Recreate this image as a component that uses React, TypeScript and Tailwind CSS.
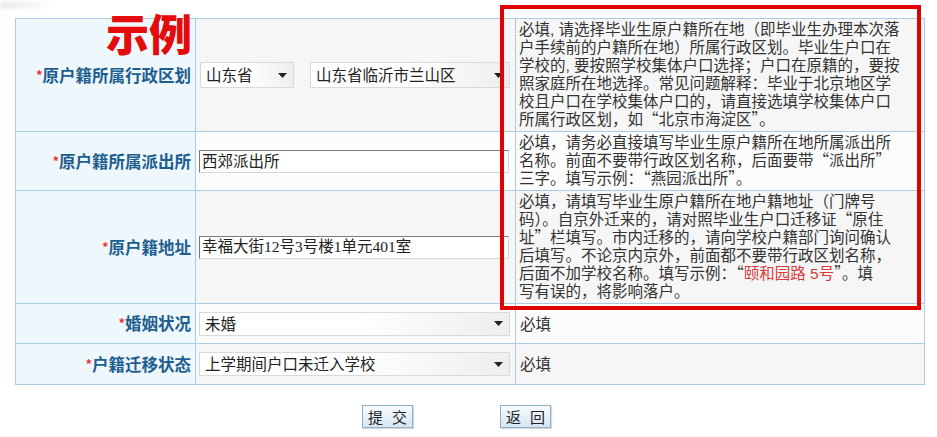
import React from 'react';

const Arrow: React.FC = () => (
  <svg width="9" height="5" viewBox="0 0 9 5" className="shrink-0">
    <path d="M0 0 L9 0 L4.5 5 Z" fill="#222" />
  </svg>
);

const FakeSelect: React.FC<{ value: string; className: string }> = ({ value, className }) => (
  <div
    className={`flex items-center justify-between border border-[#dadada] bg-gradient-to-r from-white via-white to-[#eeeeee] pl-[5px] pr-[6px] text-[15.5px] text-[#222] ${className}`}
  >
    <span className="whitespace-nowrap leading-none">{value}</span>
    <Arrow />
  </div>
);

const FakeInput: React.FC<{ value: string; className?: string }> = ({ value, className = '' }) => (
  <div
    className={`flex items-center h-[23px] w-[310px] bg-white border border-[#cfd8de] border-t-[#7a7a7a] border-l-[#7a7a7a] pl-[2px] text-[15.5px] text-[#222] ${className}`}
  >
    <span className="whitespace-nowrap leading-none">{value}</span>
  </div>
);

const Label: React.FC<{ text: string }> = ({ text }) => (
  <td className="border border-[#a9cde0] bg-[#eef7fc] text-right align-middle pr-[4px] whitespace-nowrap">
    <span className="text-[#e23a3a] text-[13px] font-bold align-[2px]">*</span>
    <span className="text-[#1d5e8e] text-[16.5px] font-bold">{text}</span>
  </td>
);

// CJK curly quotes take a full em, so render them in the CJK face
const withQuotes = (s: string): React.ReactNode =>
  s.split(/([“”])/).map((part, i) =>
    part === '“' || part === '”' ? (
      <span key={i} className="leading-[0px] font-['Noto_Sans_CJK_SC',sans-serif]">{part}</span>
    ) : (
      part
    ),
  );

const Hint: React.FC<{ lines: React.ReactNode[]; bg: string }> = ({ lines, bg }) => (
  <td
    className={`border border-[#a9cde0] ${bg} align-top px-[3px] py-[2px] text-[15.5px] leading-[18px] text-[#333] font-['Liberation_Sans','Noto_Sans_CJK_SC',sans-serif]`}
  >
    {lines.map((l, i) => (
      <div key={i} className="whitespace-nowrap">
        {typeof l === 'string' ? withQuotes(l) : l}
      </div>
    ))}
  </td>
);

const SmallButton: React.FC<{ a: string; b: string }> = ({ a, b }) => (
  <button className="flex items-center justify-center gap-[9px] w-[51px] h-[23px] border border-[#8fb0c8] bg-gradient-to-b from-[#f7fbfe] to-[#d6e6f2] text-[15px] leading-none text-[#222] shadow-[1px_1px_1px_rgba(0,0,0,0.15)]">
    <span>{a}</span>
    <span>{b}</span>
  </button>
);

const App: React.FC = () => {
  return (
    <div className="relative w-[937px] h-[437px] bg-white overflow-hidden font-['Noto_Sans_CJK_SC','Noto_Sans',sans-serif]">
      {/* faint smudge top-left */}
      <div className="absolute left-0 top-[2px] w-[55px] h-[6px] bg-gradient-to-r from-[#e4e4e4] to-transparent blur-[2px]" />

      <div className="pt-[18px] pl-[15px]">
        <table className="border-collapse table-fixed w-[909px]">
          <colgroup>
            <col className="w-[180px]" />
            <col className="w-[320px]" />
            <col className="w-[409px]" />
          </colgroup>
          <tbody>
            <tr className="h-[113px]">
              <Label text="原户籍所属行政区划" />
              <td className="border border-[#a9cde0] bg-[#f6f6f6] align-middle pl-[4px]">
                <div className="flex items-center gap-[16px]">
                  <FakeSelect value="山东省" className="w-[94px] h-[26px]" />
                  <FakeSelect value="山东省临沂市兰山区" className="w-[200px] h-[26px] -mr-[10px]" />
                </div>
              </td>
              <Hint
                bg="bg-[#f6f6f6]"
                lines={[
                  '必填, 请选择毕业生原户籍所在地（即毕业生办理本次落',
                  '户手续前的户籍所在地）所属行政区划。毕业生户口在',
                  '学校的, 要按照学校集体户口选择；户口在原籍的，要按',
                  '照家庭所在地选择。常见问题解释：毕业于北京地区学',
                  '校且户口在学校集体户口的，请直接选填学校集体户口',
                  '所属行政区划，如“北京市海淀区”。',
                ]}
              />
            </tr>
            <tr className="h-[58px]">
              <Label text="原户籍所属派出所" />
              <td className="border border-[#a9cde0] bg-[#fcfcfc] align-middle pl-[3px]">
                <FakeInput value="西郊派出所" />
              </td>
              <Hint
                bg="bg-[#fcfcfc]"
                lines={[
                  '必填，请务必直接填写毕业生原户籍所在地所属派出所',
                  '名称。前面不要带行政区划名称，后面要带“派出所”',
                  '三字。填写示例：“燕园派出所”。',
                ]}
              />
            </tr>
            <tr className="h-[113px]">
              <Label text="原户籍地址" />
              <td className="border border-[#a9cde0] bg-[#f6f6f6] align-middle pl-[3px]">
                <FakeInput
                  value="幸福大街12号3号楼1单元401室"
                  className="font-['Liberation_Serif','Noto_Sans_CJK_SC',serif]"
                />
              </td>
              <Hint
                bg="bg-[#f6f6f6]"
                lines={[
                  '必填，请填写毕业生原户籍所在地户籍地址（门牌号',
                  '码）。自京外迁来的，请对照毕业生户口迁移证“原住',
                  '址”栏填写。市内迁移的，请向学校户籍部门询问确认',
                  '后填写。不论京内京外，前面都不要带行政区划名称，',
                  <>
                    后面不加学校名称。填写示例：{withQuotes('“')}
                    <span className="text-[#d83a3a]">颐和园路 5号</span>
                    {withQuotes('”')}。填
                  </>,
                  '写有误的，将影响落户。',
                ]}
              />
            </tr>
            <tr className="h-[40px]">
              <Label text="婚姻状况" />
              <td className="border border-[#a9cde0] bg-[#fcfcfc] align-middle pl-[3px]">
                <FakeSelect value="未婚" className="w-[311px] h-[24px]" />
              </td>
              <td className="border border-[#a9cde0] bg-[#fcfcfc] align-middle pl-[4px] text-[15.5px] text-[#333]">必填</td>
            </tr>
            <tr className="h-[41px]">
              <Label text="户籍迁移状态" />
              <td className="border border-[#a9cde0] bg-[#f6f6f6] align-middle pl-[3px]">
                <FakeSelect value="上学期间户口未迁入学校" className="w-[311px] h-[24px]" />
              </td>
              <td className="border border-[#a9cde0] bg-[#f6f6f6] align-middle pl-[4px] text-[15.5px] text-[#333]">必填</td>
            </tr>
          </tbody>
        </table>

        <div className="flex gap-[87px] ml-[347px] mt-[20px]">
          <SmallButton a="提" b="交" />
          <SmallButton a="返" b="回" />
        </div>
      </div>

      {/* overlay annotations */}
      <div className="absolute left-[106px] top-[15px] text-[43px] leading-none font-black text-[#e30b0b] font-['Liberation_Sans','Noto_Sans_CJK_SC',sans-serif]">
        示例
      </div>
      <div className="absolute left-[500px] top-[5px] w-[421px] h-[305px] border-[4px] border-[#e30000]" />
    </div>
  );
};

export default App;
